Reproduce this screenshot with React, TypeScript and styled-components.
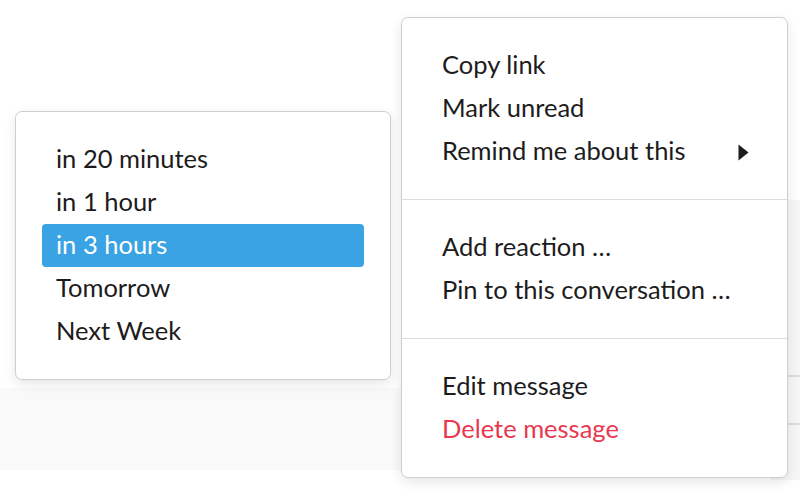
import styled, { createGlobalStyle } from "styled-components";

const GlobalStyle = createGlobalStyle`
  html, body {
    margin: 0;
    padding: 0;
    background: #fff;
    font-family: Lato, "Open Sans", sans-serif;
  }
`;

const Page = styled.div`
  position: relative;
  width: 800px;
  height: 491px;
  overflow: hidden;
  display: grid;
  grid-template-columns: 1fr 30px;
`;

const MainArea = styled.div`
  display: flex;
  flex-direction: column;
  padding-top: 388px;
`;

const Band = styled.div`
  height: 82px;
  background: #f9f9f9;
`;

const SideArea = styled.div`
  display: flex;
  flex-direction: column;
  padding-top: 200px;
`;

const SideRow = styled.div<{ $h: number }>`
  height: ${(p) => p.$h}px;
  background: #f6f6f6;
  border-bottom: 2px solid #dddddd;
`;

const SideRest = styled.div`
  height: 55px;
  background: #f6f6f6;
`;

const Menu = styled.div<{ $left: number; $top: number; $width: number }>`
  position: absolute;
  left: ${(p) => p.$left}px;
  top: ${(p) => p.$top}px;
  width: ${(p) => p.$width}px;
  box-sizing: border-box;
  background: #fff;
  border: 1px solid #cfcfcf;
  border-radius: 7px;
  box-shadow: 0 4px 12px rgba(0, 0, 0, 0.1);
  display: flex;
  flex-direction: column;
`;

const Section = styled.div<{ $px: number }>`
  padding: 26px ${(p) => p.$px}px;
  border-bottom: 1px solid #dddddd;
  display: flex;
  flex-direction: column;

  &:last-child {
    border-bottom: none;
  }
`;

const Item = styled.div<{ $danger?: boolean; $active?: boolean }>`
  height: 43px;
  display: flex;
  align-items: center;
  justify-content: space-between;
  font-size: 25.5px;
  line-height: 1;
  padding-bottom: 1px;
  box-sizing: border-box;
  color: ${(p) => (p.$danger ? "#e8384f" : p.$active ? "#fff" : "#1d1c1d")};
  background: ${(p) => (p.$active ? "#3aa3e3" : "transparent")};
  border-radius: 4px;
  white-space: nowrap;
`;

const SubItem = styled(Item)`
  padding-left: 14px;
  padding-right: 14px;
`;

const Arrow = styled.svg`
  width: 11px;
  height: 17px;
  margin-right: -2px;
  margin-top: 2px;
`;

export default function App() {
  return (
    <>
      <GlobalStyle />
      <Page>
        <MainArea>
          <Band />
        </MainArea>
        <SideArea>
          <SideRow $h={175} />
          <SideRow $h={46} />
          <SideRest />
        </SideArea>

        <Menu $left={15} $top={111} $width={376}>
          <Section $px={26}>
            <SubItem>in 20 minutes</SubItem>
            <SubItem>in 1 hour</SubItem>
            <SubItem $active>in 3 hours</SubItem>
            <SubItem>Tomorrow</SubItem>
            <SubItem>Next Week</SubItem>
          </Section>
        </Menu>

        <Menu $left={401} $top={17} $width={387}>
          <Section $px={40}>
            <Item>Copy link</Item>
            <Item>Mark unread</Item>
            <Item>
              Remind me about this
              <Arrow viewBox="0 0 11 17">
                <path d="M0.5 0.5 L10.5 8.5 L0.5 16.5 Z" fill="#1d1c1d" />
              </Arrow>
            </Item>
          </Section>
          <Section $px={40}>
            <Item>Add reaction …</Item>
            <Item>Pin to this conversation …</Item>
          </Section>
          <Section $px={40}>
            <Item>Edit message</Item>
            <Item $danger>Delete message</Item>
          </Section>
        </Menu>
      </Page>
    </>
  );
}
